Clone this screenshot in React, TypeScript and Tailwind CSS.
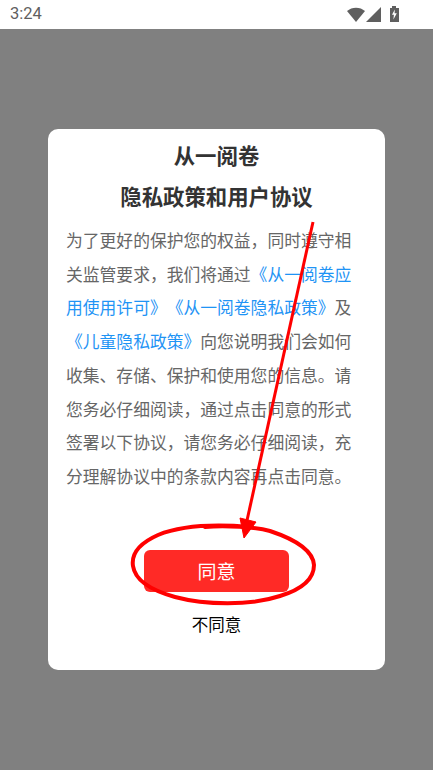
import React from 'react';

const font = { fontFamily: '"Noto Sans CJK SC", "Liberation Sans", sans-serif' };

function StatusBar() {
  return (
    <div className="h-[29px] bg-white flex items-center justify-between pl-[10px] pr-[33px]">
      <span className="text-[16.5px] text-[#5f5f5f] font-['Roboto',sans-serif]">3:24</span>
      <svg width="53" height="20" viewBox="0 0 53 20" className="text-[#5f5f5f]" fill="currentColor">
        <path d="M0 6 C5 1.5 13 1.5 18 6 L9 17 Z" />
        <path d="M19 17 L34 2 V17 Z" />
        <path fillRule="evenodd" d="M45 3 V1 H49 V3 H52 V17 H43 V3 Z M47.8 4.5 L45 9.8 H46.9 L46.4 14.5 L49.8 8.3 H47.6 Z" />
      </svg>
    </div>
  );
}

export default function App() {
  return (
    <div className="w-[433px] h-[770px] relative overflow-hidden bg-[#808080]" style={font}>
      <StatusBar />
      <div className="h-[741px] flex items-center justify-center">
        <div className="w-[337px] h-[541px] bg-white rounded-[10px] flex flex-col items-center">
          <h1 className="mt-[5px] text-[21.4px] leading-[41px] font-bold text-[#333333]">从一阅卷</h1>
          <h2 className="text-[21.4px] leading-[41px] font-bold text-[#333333]">隐私政策和用户协议</h2>
          <p className="mt-[8px] w-[301px] text-[16.8px] leading-[33.7px] text-[#666666] [text-spacing-trim:space-all]">
            为了更好的保护您的权益，同时遵守相关监管要求，我们将通过
            <span className="text-[#1f94f5]">《从一阅卷应用使用许可》《从一阅卷隐私政策》</span>
            及
            <span className="text-[#1f94f5]">《儿童隐私政策》</span>
            向您说明我们会如何收集、存储、保护和使用您的信息。请您务必仔细阅读，通过点击同意的形式签署以下协议，请您务必仔细阅读，充分理解协议中的条款内容再点击同意。
          </p>
          <button className="mt-auto w-[145px] h-[42px] rounded-[6px] bg-[#ff2a26] text-white text-[19px]">同意</button>
          <button className="mt-[20px] mb-[34px] text-[16.5px] leading-[24px] text-black">不同意</button>
        </div>
      </div>
      {/* annotation drawn on top of the screenshot */}
      <svg className="absolute inset-0" width="433" height="770" viewBox="0 0 433 770" fill="none">
        <path d="M313 222 L246 525" stroke="#ff0000" strokeWidth="3" />
        <path d="M240 518 L256 522 L244 538 Z" fill="#ff0000" stroke="#ff0000" strokeWidth="1" />
        <path
          d="M250 527 C215 524 180 526 158 535 C140 543 131 553 133 566 C135 580 150 590 175 597 C205 605 250 606 280 596 C303 589 314 578 314 565 C313 551 297 540 270 531 C255 527 225 525 205 527"
          stroke="#ff0000"
          strokeWidth="4"
          strokeLinecap="round"
        />
      </svg>
    </div>
  );
}
